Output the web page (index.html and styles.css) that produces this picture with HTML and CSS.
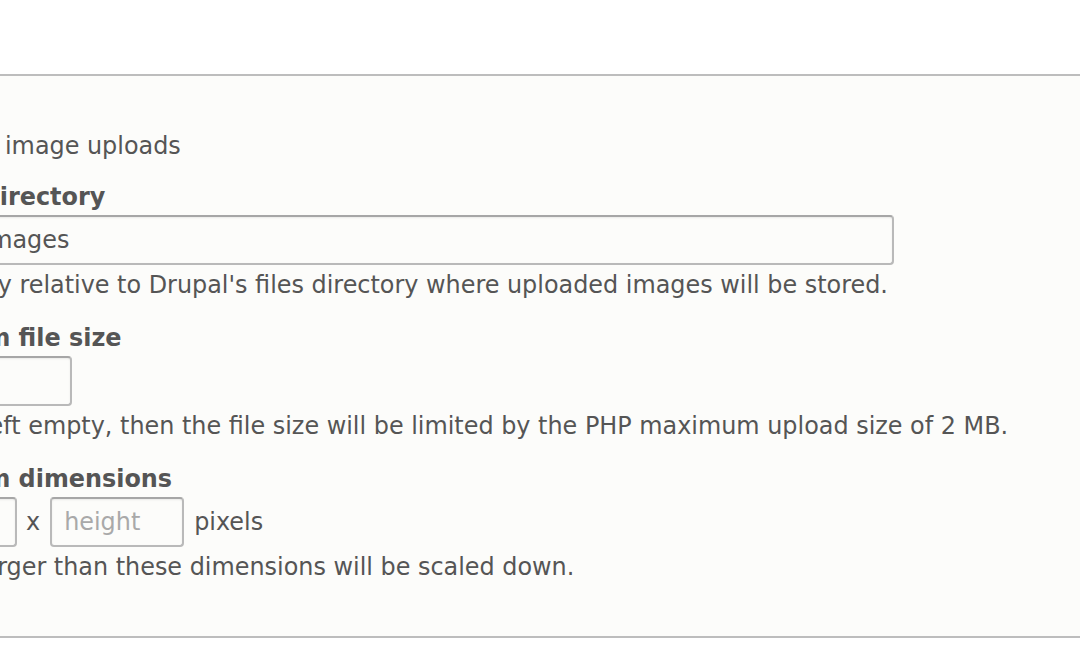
FILE: index.html
```html
<!DOCTYPE html>
<html lang="en">
<head>
<meta charset="utf-8">
<title>Image upload settings</title>
<link rel="stylesheet" href="styles.css">
</head>
<body>
<form class="settings">
  <div class="fieldset">
    <div class="item item-check">
      <span class="checkbox" aria-hidden="true"></span>
      <label class="check-label">Enable image uploads</label>
    </div>
    <div class="item">
      <label class="label">Upload directory</label>
      <input class="input input-dir" type="text" value="inline-images">
      <div class="description">A directory relative to Drupal's files directory where uploaded images will be stored.</div>
    </div>
    <div class="item">
      <label class="label">Maximum file size</label>
      <input class="input input-size" type="text" value="">
      <div class="description">If this is left empty, then the file size will be limited by the PHP maximum upload size of 2 MB.</div>
    </div>
    <div class="item">
      <label class="label">Maximum dimensions</label>
      <div class="dims">
        <input class="input input-dim" type="text" placeholder="width">
        <span class="times">x</span>
        <input class="input input-dim input-dim-h" type="text" placeholder="height">
        <span class="unit">pixels</span>
      </div>
      <div class="description">Images larger than these dimensions will be scaled down.</div>
    </div>
  </div>
</form>
</body>
</html>
```
FILE: styles.css
```css
html, body {
  margin: 0;
  padding: 0;
  overflow: hidden;
  background: #ffffff;
}

body {
  font-family: "DejaVu Sans", "Lucida Grande", Verdana, sans-serif;
  font-size: 23.9px;
  line-height: 30px;
  color: #555555;
}

.settings {
  margin: 0;
  padding-top: 74px;
}

.fieldset {
  margin: 0 -40px 0 -160px;
  padding: 55px 0 54px 39px;
  border: 2px solid #bdbdbd;
  background: #fcfcfa;
}

.item {
  margin-top: 23px;
}

.item-check {
  margin-top: 0;
  display: flex;
  align-items: center;
}

.item-check + .item {
  margin-top: 21px;
}

.checkbox {
  width: 22px;
  height: 22px;
  border: 2px solid #b8b8b8;
  border-radius: 4px;
  background: #ffffff;
  margin-right: 9px;
  flex: none;
}

.check-label {
  font-weight: 400;
}

.label {
  display: block;
  font-weight: 700;
  margin-bottom: 3px;
  margin-left: -1px;
}

.input {
  display: block;
  box-sizing: border-box;
  height: 50px;
  margin: 0;
  padding: 0 12px;
  font: inherit;
  color: #555555;
  background: #fcfcfa;
  border: 2px solid #b9b9b9;
  border-top-color: #a6a6a6;
  border-radius: 4px;
  box-shadow: inset 0 1px 2px rgba(0, 0, 0, 0.08);
  outline: none;
}

.input::placeholder {
  color: #a9a9a9;
  opacity: 1;
}

.input-dir {
  width: 1013px;
  padding-left: 26px;
}

.input-size {
  width: 191px;
}

.dims {
  display: flex;
  align-items: center;
}

.input-dim {
  width: 136px;
}

.input-dim-h {
  width: 134px;
}

.times {
  margin: 0 10px 0 9px;
}

.unit {
  margin-left: 10px;
}

.description {
  margin-top: 5px;
}
```
